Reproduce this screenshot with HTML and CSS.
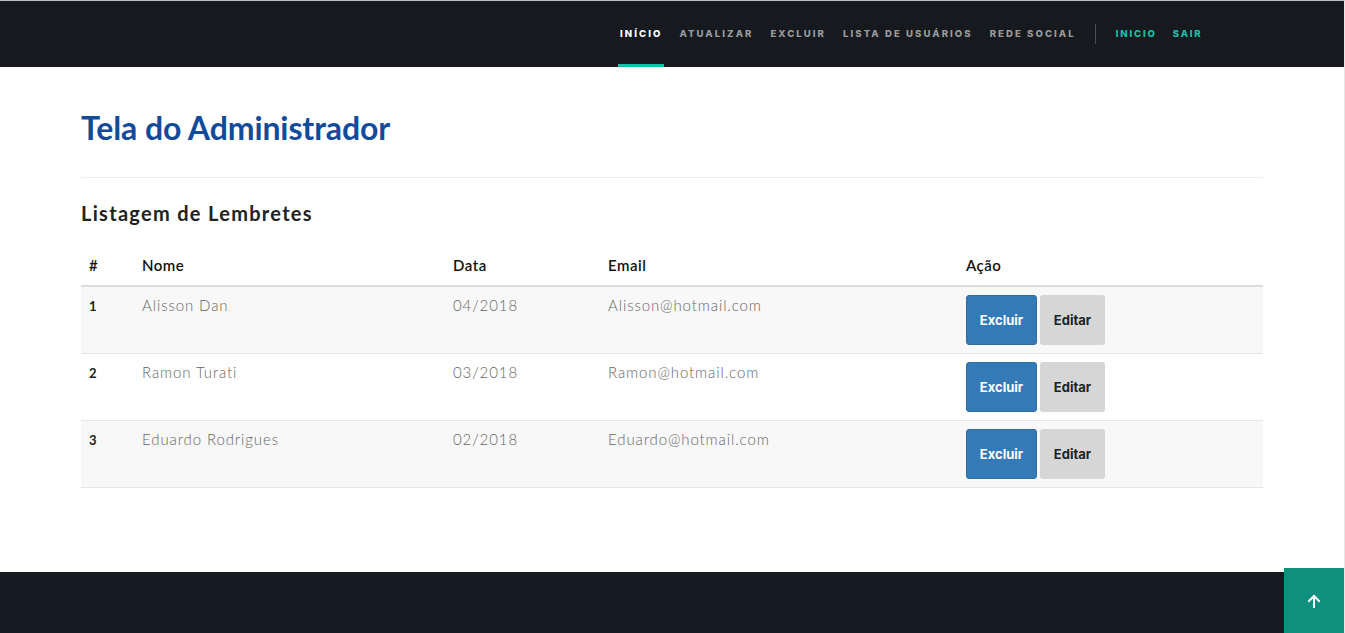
FILE: index.html
```html
<!DOCTYPE html>
<html lang="pt">
<head>
<meta charset="utf-8">
<title>Tela do Administrador</title>
<link rel="stylesheet" href="styles.css">
</head>
<body>
<div class="page">
  <header class="topbar">
    <nav class="nav">
      <a class="nav-link active" href="#">INÍCIO</a>
      <a class="nav-link" href="#">ATUALIZAR</a>
      <a class="nav-link" href="#">EXCLUIR</a>
      <a class="nav-link" href="#">LISTA DE USUÁRIOS</a>
      <a class="nav-link" href="#">REDE SOCIAL</a>
      <span class="nav-sep"></span>
      <a class="nav-link accent" href="#">INICIO</a>
      <a class="nav-link accent" href="#">SAIR</a>
    </nav>
  </header>

  <main class="content">
    <h1 class="title">Tela do Administrador</h1>
    <hr class="rule">
    <h2 class="subtitle">Listagem de Lembretes</h2>
    <table class="table">
      <thead>
        <tr>
          <th class="c-num">#</th>
          <th class="c-nome">Nome</th>
          <th class="c-data">Data</th>
          <th class="c-email">Email</th>
          <th class="c-acao">Ação</th>
        </tr>
      </thead>
      <tbody>
        <tr>
          <td class="num">1</td>
          <td>Alisson Dan</td>
          <td>04/2018</td>
          <td>Alisson@hotmail.com</td>
          <td class="actions"><button class="btn btn-primary">Excluir</button><button class="btn btn-default">Editar</button></td>
        </tr>
        <tr>
          <td class="num">2</td>
          <td>Ramon Turati</td>
          <td>03/2018</td>
          <td>Ramon@hotmail.com</td>
          <td class="actions"><button class="btn btn-primary">Excluir</button><button class="btn btn-default">Editar</button></td>
        </tr>
        <tr>
          <td class="num">3</td>
          <td>Eduardo Rodrigues</td>
          <td>02/2018</td>
          <td>Eduardo@hotmail.com</td>
          <td class="actions"><button class="btn btn-primary">Excluir</button><button class="btn btn-default">Editar</button></td>
        </tr>
      </tbody>
    </table>
  </main>

  <footer class="footer"></footer>
  <a class="to-top" href="#" aria-label="Voltar ao topo">
    <svg width="14" height="14" viewBox="0 0 14 14" fill="none" stroke="#fff" stroke-width="2" stroke-linecap="square"><path d="M7 13V2M2 7l5-5 5 5"/></svg>
  </a>
</div>
</body>
</html>
```

FILE: styles.css
```css
* { box-sizing: border-box; }
html, body { margin: 0; padding: 0; height: 100%; }
body {
  background: #fff;
  font-family: "Lato", "Open Sans", sans-serif;
  color: #333;
  overflow: hidden;
}
.page {
  position: relative;
  width: 1345px;
  height: 633px;
  border-top: 1px solid #bdbdbd;
  border-right: 1px solid #e6e6e6;
  display: flex;
  flex-direction: column;
}
.topbar {
  height: 66px;
  background: #16191e;
  display: flex;
  align-items: stretch;
  padding-left: 618px;
}
.nav {
  display: flex;
  align-items: stretch;
}
.nav-link {
  display: flex;
  align-items: center;
  padding: 1px 2px 0 2px;
  margin-right: 13px;
  font-family: "Inter", "Liberation Sans", sans-serif;
  font-weight: 800;
  font-size: 9.6px;
  letter-spacing: 2.05px;
  color: #9a9a9a;
  text-decoration: none;
  border-bottom: 3px solid transparent;
}
.nav-link.active {
  color: #fff;
  border-bottom-color: #17c1a8;
}
.nav-link.accent {
  color: #17c1a8;
  letter-spacing: 1.8px;
  margin-right: 12px;
}
.nav-sep {
  width: 1px;
  height: 20px;
  background: #4a4d52;
  align-self: center;
  margin: 0 18px 0 4px;
}
.content {
  flex: 1;
  padding: 0 81px 0 81px;
}
.title {
  margin: 42px 0 0;
  font-family: "Lato", sans-serif;
  font-size: 32px;
  font-weight: 700;
  color: #134b9b;
  letter-spacing: -0.1px;
  line-height: 38px;
}
.rule {
  margin: 30px 0 0;
  border: 0;
  border-top: 1px solid #eee;
}
.subtitle {
  margin: 22px 0 0;
  font-size: 20px;
  font-weight: 700;
  color: #222;
  line-height: 26px;
  letter-spacing: 1.3px;
}
.table {
  margin-top: 21px;
  width: 100%;
  border-collapse: collapse;
}
.table th {
  text-align: left;
  font-size: 15px;
  font-weight: 600;
  color: #111;
  padding: 8px 8px 10px;
  border-bottom: 2px solid #ddd;
  line-height: 20px;
  letter-spacing: 0.5px;
}
.c-num { width: 53px; }
.c-nome { width: 311px; }
.c-data { width: 155px; }
.c-email { width: 358px; }
.table td {
  vertical-align: top;
  font-size: 15px;
  font-weight: 300;
  color: #666;
  padding: 8px 8px 8px;
  line-height: 20px;
  border-bottom: 1px solid #e5e5e5;
  height: 67px;
  letter-spacing: 0.9px;
}
.table tbody tr:nth-child(odd) { background: #f8f8f8; }
.table td.num {
  font-weight: 700;
  color: #222;
  font-size: 13px;
  padding-top: 9px;
  letter-spacing: 0;
}
.table td.actions {
  padding: 8px 8px 8px;
  letter-spacing: 0;
}
.btn {
  height: 50px;
  border: 0;
  border-radius: 3px;
  font-family: "Inter", "Liberation Sans", sans-serif;
  font-size: 13px;
  font-weight: 700;
  cursor: pointer;
  vertical-align: top;
}
.btn-primary {
  width: 71px;
  background: #337ab7;
  color: #fff;
  border: 1px solid #2e6da4;
  margin-right: 3px;
}
.btn-default {
  width: 65px;
  background: #d6d6d6;
  color: #222;
}
.footer {
  height: 61px;
  background: #161a22;
}
.to-top {
  position: absolute;
  right: 0;
  bottom: 0;
  width: 60px;
  height: 65px;
  background: #0f8f7e;
  display: flex;
  align-items: center;
  justify-content: center;
}
```
